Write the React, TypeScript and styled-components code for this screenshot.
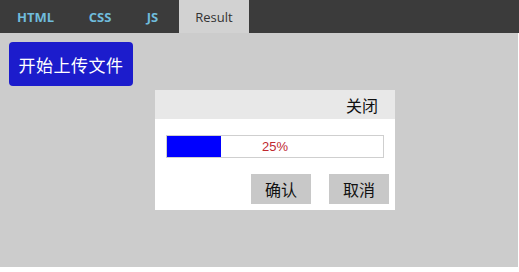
import styled, { createGlobalStyle } from "styled-components";

const Global = createGlobalStyle`
  html, body { margin: 0; padding: 0; background: #fff; }
  body { font-family: "Noto Sans CJK SC", "Open Sans", sans-serif; }
`;

const Page = styled.div`
  width: 519px;
  height: 272px;
  display: flex;
  flex-direction: column;
  background: #fff;
`;

const TabBar = styled.div`
  height: 33px;
  background: #3b3b3b;
  display: flex;
  align-items: stretch;
  padding-left: 4px;
`;

const Tab = styled.div<{ $active?: boolean; $w: number; $shift?: number }>`
  width: ${(p) => p.$w}px;
  box-sizing: border-box;
  padding-right: ${(p) => Math.max(p.$shift || 0, 0)}px;
  padding-left: ${(p) => Math.max(-(p.$shift || 0), 0)}px;
  display: flex;
  align-items: center;
  justify-content: center;
  font-family: "Open Sans", sans-serif;
  font-size: 13px;
  font-weight: ${(p) => (p.$active ? 400 : 700)};
  color: ${(p) => (p.$active ? "#333" : "#6fbcdc")};
  background: ${(p) => (p.$active ? "#d2d2d2" : "transparent")};
`;

const Stage = styled.div`
  flex: 1;
  background: #cccccc;
  margin-bottom: 5px;
  margin-right: 1px;
  padding: 9px 0 0 9px;
  display: flex;
  flex-direction: column;
  align-items: flex-start;
`;

const UploadButton = styled.button`
  width: 124px;
  height: 44px;
  border: none;
  border-radius: 4px;
  background: #1c1ccc;
  color: #fff;
  font-family: "Noto Sans CJK SC", sans-serif;
  font-size: 17px;
  padding: 0;
  letter-spacing: 0.5px;
`;

const Dialog = styled.div`
  margin: 4px 0 0 146px;
  width: 240px;
  background: #fff;
  display: flex;
  flex-direction: column;
`;

const DialogHeader = styled.div`
  height: 29px;
  background: #e8e8e8;
  display: flex;
  align-items: center;
  justify-content: flex-end;
  padding-right: 17px;
  font-size: 16px;
  color: #111;
`;

const DialogBody = styled.div`
  padding: 16px 11px 6px 11px;
  display: flex;
  flex-direction: column;
`;

const Progress = styled.div`
  position: relative;
  height: 23px;
  border: 1px solid #cfcfcf;
  box-sizing: border-box;
  width: 218px;
  display: flex;
  align-items: center;
  justify-content: center;
`;

const Fill = styled.div`
  position: absolute;
  left: 0;
  top: 0;
  bottom: 0;
  background: #0000ff;
`;

const Percent = styled.span`
  position: relative;
  font-size: 13px;
  color: #c0282e;
  font-family: "Liberation Sans", sans-serif;
`;

const Actions = styled.div`
  display: flex;
  justify-content: flex-end;
  gap: 18px;
  margin-top: 16px;
  margin-right: -5px;
`;

const ActionButton = styled.button`
  width: 60px;
  height: 30px;
  border: none;
  background: #c8c8c8;
  font-family: "Noto Sans CJK SC", sans-serif;
  font-size: 16px;
  color: #111;
  padding: 0;
`;

export default function App() {
  const pct = 25;
  return (
    <>
      <Global />
      <Page>
        <TabBar>
          <Tab $w={58} $shift={-5}>HTML</Tab>
          <Tab $w={76}>CSS</Tab>
          <Tab $w={41} $shift={12}>JS</Tab>
          <Tab $w={70} $active>Result</Tab>
        </TabBar>
        <Stage>
          <UploadButton>开始上传文件</UploadButton>
          <Dialog>
            <DialogHeader>关闭</DialogHeader>
            <DialogBody>
              <Progress>
                <Fill style={{ width: `${pct}%` }} />
                <Percent>{pct}%</Percent>
              </Progress>
              <Actions>
                <ActionButton>确认</ActionButton>
                <ActionButton>取消</ActionButton>
              </Actions>
            </DialogBody>
          </Dialog>
        </Stage>
      </Page>
    </>
  );
}
